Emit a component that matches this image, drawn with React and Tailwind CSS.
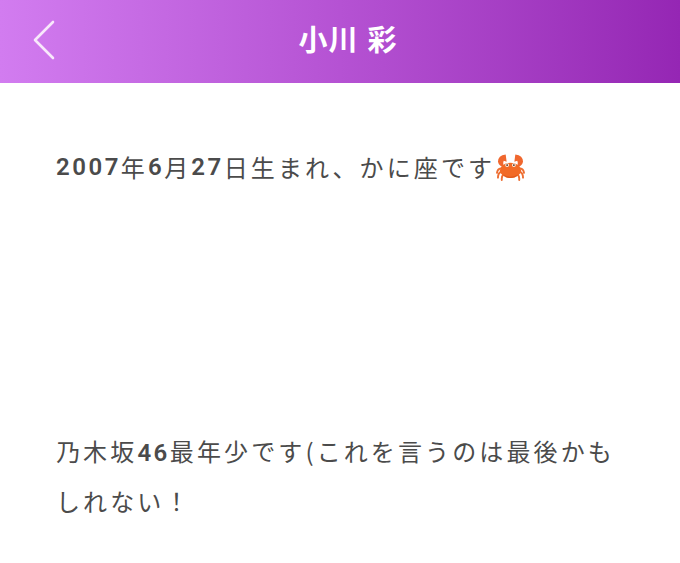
const cjk = { fontFamily: '"Noto Sans CJK JP", "Noto Sans", sans-serif' };
const num = { fontFamily: 'Roboto, "Noto Sans CJK JP", sans-serif' };

function Crab() {
  return (
    <svg width="29" height="27" viewBox="0 0 30 28" className="inline-block shrink-0 ml-[1px]" aria-hidden="true">
      <g fill="none" stroke="#ee6f33" strokeWidth="2" strokeLinecap="round">
        <path d="M5 15 Q1.5 15.5 1 19.5" />
        <path d="M5 18.5 Q2 20 2 24.5" />
        <path d="M8 21 Q5.5 23 6 27" />
        <path d="M25 15 Q28.5 15.5 29 19.5" />
        <path d="M25 18.5 Q28 20 28 24.5" />
        <path d="M22 21 Q24.5 23 24 27" />
      </g>
      <path d="M10 0.5 Q2 1.5 2 8 Q3 13 9 14 Q6.5 10 8 7 L11 8 Z" fill="#f0672e" />
      <path d="M20 0.5 Q28 1.5 28 8 Q27 13 21 14 Q23.5 10 22 7 L19 8 Z" fill="#f0672e" />
      <ellipse cx="15" cy="17" rx="11" ry="8" fill="#f26a26" />
      <path d="M7 21 Q15 26 23 21 Q20 25 15 25 Q10 25 7 21 Z" fill="#e05a1c" />
      <circle cx="11.5" cy="11.5" r="2" fill="#fbeee2" />
      <circle cx="18.5" cy="11.5" r="2" fill="#fbeee2" />
      <circle cx="11.5" cy="11.5" r="1" fill="#4a352a" />
      <circle cx="18.5" cy="11.5" r="1" fill="#4a352a" />
    </svg>
  );
}

export default function App() {
  return (
    <div className="w-[680px] h-[563px] bg-white overflow-hidden" style={cjk}>
      <header className="h-[83px] flex items-center pl-[32px] pr-[33px] bg-gradient-to-r from-[#d27cf0] via-[#b552d3] to-[#9526b4]">
        <svg width="24" height="40" viewBox="0 0 24 40" className="mb-[3px]" fill="none" stroke="#f8e8fb" strokeWidth="2.6" strokeLinecap="round" strokeLinejoin="round" aria-hidden="true">
          <path d="M21 2 L3 20 L21 38" />
        </svg>
        <h1 className="flex-1 text-center text-[29px] leading-none font-bold text-white pr-[8px] pb-[6px]">
          <span className="tracking-[1px]">小川</span>
          <span className="ml-[9px]">彩</span>
        </h1>
      </header>
      <main className="px-[56px] pt-[66px] text-[24px] tracking-[3.12px] text-[#4b4b4b] leading-[48px]">
        <p className="flex items-center h-[36px]">
          <span className="font-semibold tracking-[2.5px]" style={num}>2007</span>年<span className="font-semibold tracking-[2.5px]" style={num}>6</span>月<span className="font-semibold tracking-[2.5px]" style={num}>27</span>日生まれ、かに座です
          <Crab />
        </p>
        <p className="mt-[242px]">
          乃木坂<span className="font-semibold tracking-[2.5px]" style={num}>46</span>最年少です(これを言うのは最後かもしれない！
        </p>
      </main>
    </div>
  );
}
